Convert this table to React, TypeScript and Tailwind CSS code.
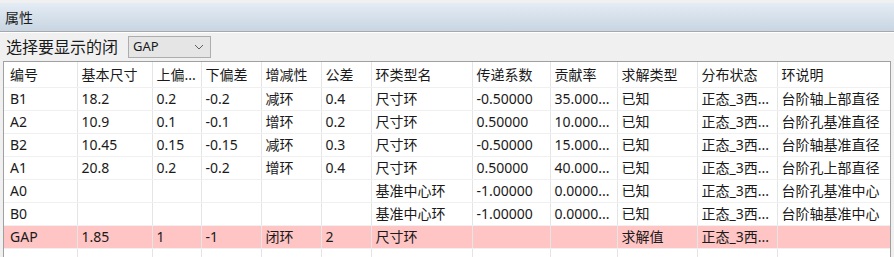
import React from 'react';

const cols = [73, 75, 49, 60, 60, 50, 101, 78, 67, 80, 80, 114];

const headers = ['编号', '基本尺寸', '上偏...', '下偏差', '增减性', '公差', '环类型名', '传递系数', '贡献率', '求解类型', '分布状态', '环说明'];

const rows: { cells: string[]; hot?: boolean }[] = [
  { cells: ['B1', '18.2', '0.2', '-0.2', '减环', '0.4', '尺寸环', '-0.50000', '35.000...', '已知', '正态_3西...', '台阶轴上部直径'] },
  { cells: ['A2', '10.9', '0.1', '-0.1', '增环', '0.2', '尺寸环', '0.50000', '10.000...', '已知', '正态_3西...', '台阶孔基准直径'] },
  { cells: ['B2', '10.45', '0.15', '-0.15', '减环', '0.3', '尺寸环', '-0.50000', '15.000...', '已知', '正态_3西...', '台阶轴基准直径'] },
  { cells: ['A1', '20.8', '0.2', '-0.2', '增环', '0.4', '尺寸环', '0.50000', '40.000...', '已知', '正态_3西...', '台阶孔上部直径'] },
  { cells: ['A0', '', '', '', '', '', '基准中心环', '-1.00000', '0.0000...', '已知', '正态_3西...', '台阶孔基准中心'] },
  { cells: ['B0', '', '', '', '', '', '基准中心环', '-1.00000', '0.0000...', '已知', '正态_3西...', '台阶轴基准中心'] },
  { cells: ['GAP', '1.85', '1', '-1', '闭环', '2', '尺寸环', '', '', '求解值', '正态_3西...', ''], hot: true },
];

export default function App() {
  return (
    <div
      className="w-[894px] h-[257px] overflow-hidden bg-white text-[14px] text-[#1a1a1a] flex flex-col"
      style={{ fontFamily: '"Noto Sans", "Noto Sans CJK SC", sans-serif' }}
    >
      {/* title bar */}
      <div className="h-[32px] shrink-0 bg-[#f0f0f0] pt-[3px] flex flex-col">
        <div className="flex-1 flex items-center pl-[5px] bg-gradient-to-b from-[#e4ecf4] to-[#c8d5e2] border-b border-[#a8a8a8]">
          属性
        </div>
      </div>

      {/* toolbar */}
      <div className="h-[29px] shrink-0 bg-[#f0f0f0] flex items-center pl-[6px] gap-[10px] border-t border-white">
        <span className="text-[16px]">选择要显示的闭</span>
        <div className="w-[83px] h-[22px] bg-[#e5e5e5] border border-[#adadad] flex items-center justify-between pl-[4px] pr-[6px] text-[13px]">
          <span>GAP</span>
          <svg width="10" height="6" viewBox="0 0 10 6" fill="none" stroke="#606060" strokeWidth="1">
            <path d="M1 1l4 4 4-4" />
          </svg>
        </div>
      </div>

      {/* grid */}
      <div className="flex-1 min-h-0 bg-[#f0f0f0] pl-[3px] pr-[3px]">
        <div className="w-[888px] h-full bg-white border-t border-l border-r border-[#a0a0a0] overflow-hidden">
          <table className="table-fixed border-collapse w-[887px]">
            <colgroup>
              {cols.map((w, i) => (
                <col key={i} style={{ width: w }} />
              ))}
            </colgroup>
            <thead>
              <tr className="h-[25px]">
                {headers.map((h, i) => (
                  <th
                    key={i}
                    className={`p-0 font-normal text-left whitespace-nowrap overflow-hidden border-r border-[#e5e5e5] border-b border-b-[#f0f0f0] ${i === 0 ? 'pl-[6px]' : 'pl-[4px]'}`}
                  >
                    {h}
                  </th>
                ))}
              </tr>
            </thead>
            <tbody>
              {rows.map((r, ri) => (
                <tr key={ri} className={`h-[23px] ${r.hot ? 'bg-[#ffc4c4]' : ''}`}>
                  {r.cells.map((c, ci) => (
                    <td
                      key={ci}
                      className={`p-0 leading-[22px] whitespace-nowrap overflow-hidden border-r border-[#e5e5e5] border-b border-b-[#f0f0f0] ${ci === 0 ? 'pl-[6px]' : 'pl-[4px]'}`}
                    >
                      {c}
                    </td>
                  ))}
                </tr>
              ))}
              <tr className="h-[23px]">
                {cols.map((_, ci) => (
                  <td key={ci} className="border-r border-[#e5e5e5]" />
                ))}
              </tr>
            </tbody>
          </table>
        </div>
      </div>
    </div>
  );
}
